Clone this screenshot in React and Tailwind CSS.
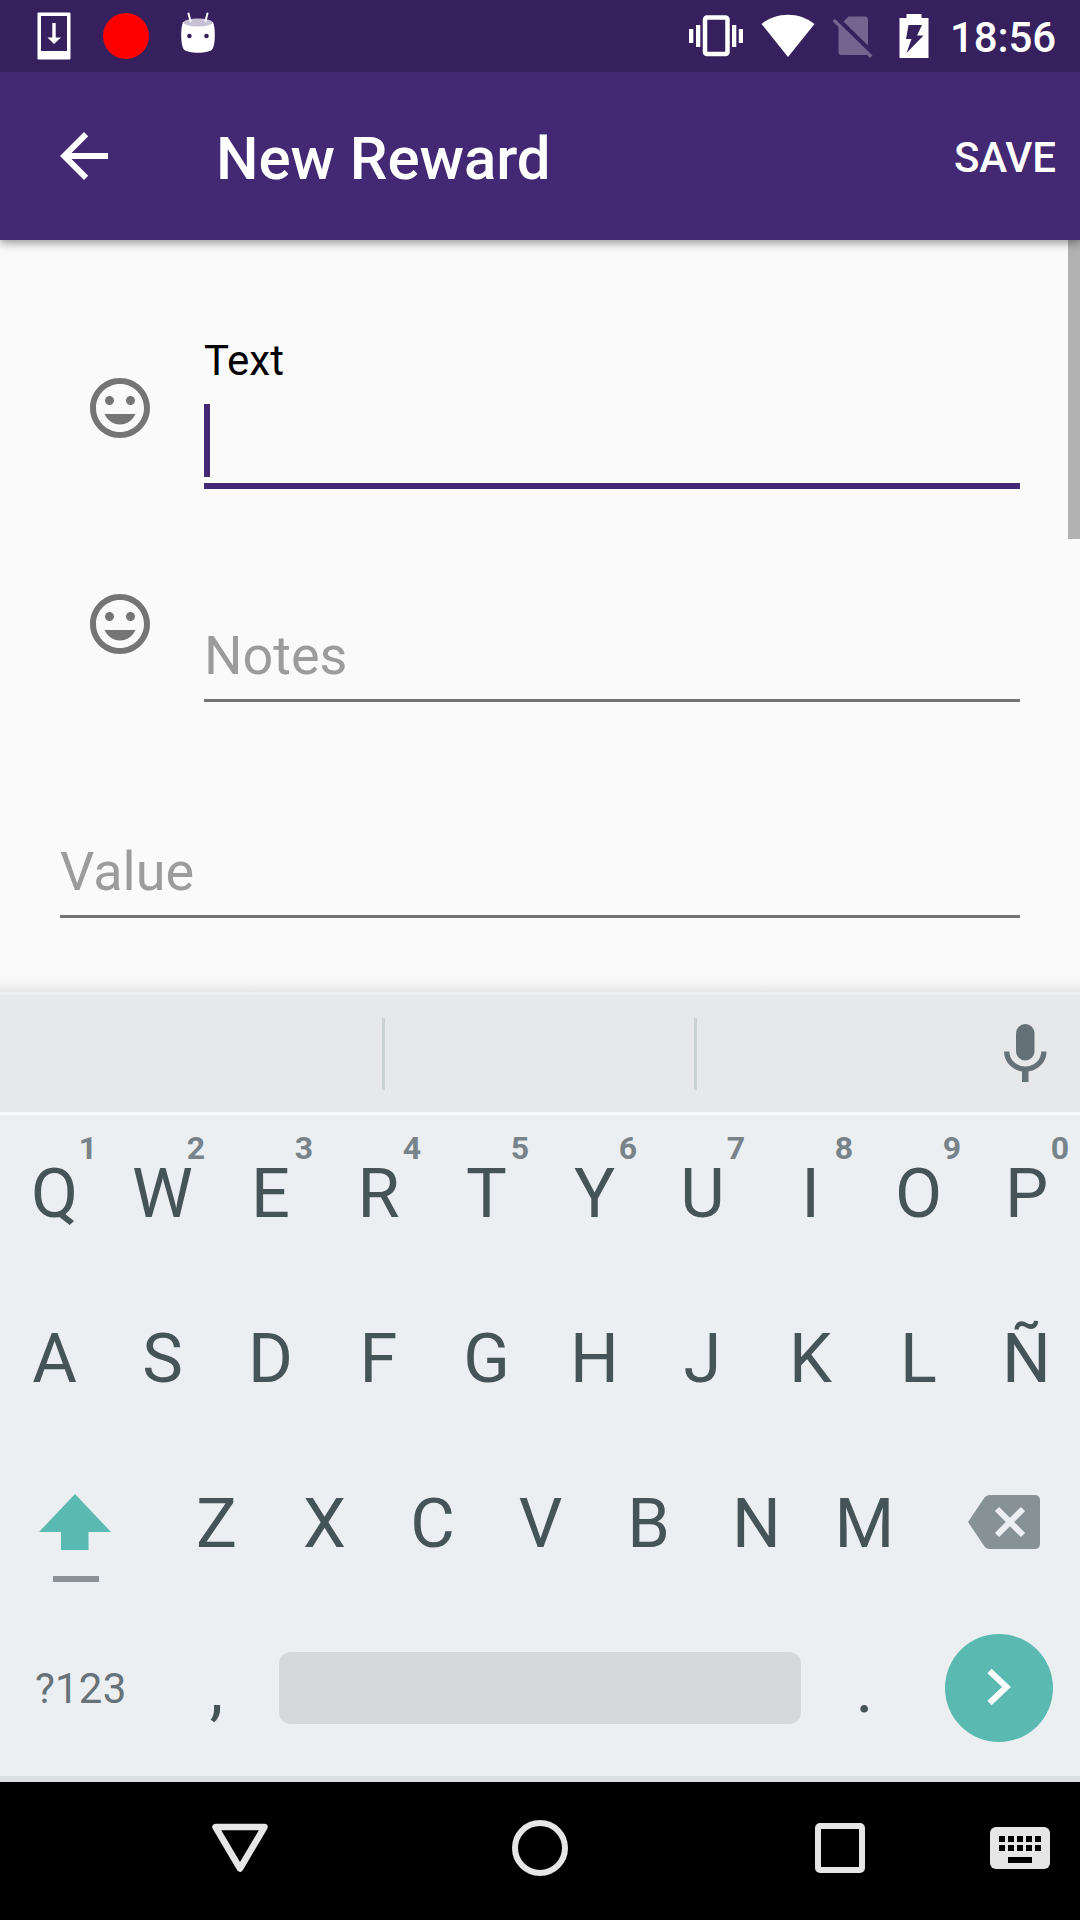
import React from "react";

const TOP_ROW = ["Q", "W", "E", "R", "T", "Y", "U", "I", "O", "P"];
const HINTS = ["1", "2", "3", "4", "5", "6", "7", "8", "9", "0"];
const HOME_ROW = ["A", "S", "D", "F", "G", "H", "J", "K", "L", "Ñ"];
const BOTTOM_ROW = ["Z", "X", "C", "V", "B", "N", "M"];

function StatusBar() {
  return (
    <div className="relative z-20 flex h-[72px] items-center bg-[#36205d] pl-[37px] pr-[25px] text-white">
      <svg className="mr-[32px] h-[72px] w-[34px]" viewBox="37 0 34 72" fill="#fff">
        <path fillRule="evenodd" d="M38.5 12.5h31q1 0 1 1v45q0 1-1 1h-31q-1 0-1-1v-45q0-1 1-1zM41 16v35h26V16z" />
        <path d="M52.3 23h3.400v14.500H61L54 44l-6.500-6.500h4.800z" />
      </svg>
      <div className="mr-[31px] h-[46px] w-[46px] rounded-full bg-[#ff0000]" />
      <svg className="h-[72px] w-[36px]" viewBox="180 0 36 72">
        <path d="M183 22C180.500 28 180.500 44 183.500 49C187 54 209 54 212.500 49C215.500 44 215.500 28 213 22Z" fill="#fff" />
        <ellipse cx="198" cy="22.500" rx="14.500" ry="4" fill="#c7c1d3" />
        <path d="M188.500 13.500l2 7.500M207.500 13.500l-2 7.500" stroke="#fff" strokeWidth="2" strokeLinecap="round" />
        <circle cx="189.400" cy="36" r="2.300" fill="#36205d" />
        <circle cx="206.500" cy="36" r="2.300" fill="#36205d" />
      </svg>
      <svg className="ml-auto mr-[18px] h-[72px] w-[54px]" viewBox="689 0 54 72" fill="#fff">
        <path d="M689 29h4.300v14H689zM696 25h4.300v22H696zM732 25h4.300v22H732zM738.800 29h4.200v14h-4.200z" />
        <rect x="705" y="17.500" width="22.500" height="36.500" rx="2" fill="none" stroke="#fff" strokeWidth="4.500" />
      </svg>
      <svg className="mr-[17px] h-[72px] w-[54px]" viewBox="760.500 0 54 72" fill="#fff">
        <path d="M787.500 57L761 24C776 11.500 799 11.500 814 24Z" />
      </svg>
      <svg className="mr-[26px] h-[72px] w-[41px]" viewBox="831.500 0 41 72" fill="#76638f">
        <path d="M843 21.500L848 16.500H864.500Q867.500 16.500 867.500 19.500V45.500Z" />
        <path d="M834.500 19L872 55.500L869.500 58L866 54.500Q865.500 55 864.500 55H841Q838 55 838 52V27L832 21Z" />
      </svg>
      <svg className="mr-[21px] h-[72px] w-[30px]" viewBox="898.500 0 30 72">
        <path fillRule="evenodd" fill="#fff" d="M906 14h15v4h7v40h-29V18h7zM908 25L905.500 39H911L906 53L923 35.500H916.500L921.500 25Z" />
      </svg>
      <span className="mt-[3px] w-[105px] whitespace-nowrap text-[42px] font-medium leading-[72px] tracking-[-0.1px]">18:56</span>
    </div>
  );
}

function Toolbar() {
  return (
    <div className="relative z-10 flex h-[168px] items-center bg-[#432874] pl-[48px] pr-[24px] text-white shadow-[0_3px_9px_rgba(0,0,0,0.4)]">
      <svg className="mr-[96px] h-[72px] w-[72px]" viewBox="0 0 24 24" fill="#fff">
        <path d="M20 11H7.830l5.590-5.590L12 4l-8 8 8 8 1.410-1.410L7.830 13H20v-2z" />
      </svg>
      <h1 className="mt-[5px] text-[60px] font-medium leading-[72px] tracking-[-0.1px]">New Reward</h1>
      <button className="ml-auto mt-[3px] text-[42px] font-medium leading-[48px] tracking-[-0.1px]">SAVE</button>
    </div>
  );
}

function EmojiIcon() {
  return (
    <svg className="h-[72px] w-[72px]" viewBox="0 0 24 24" fill="#757575">
      <path d="M11.990 2C6.470 2 2 6.480 2 12s4.470 10 9.990 10C17.520 22 22 17.520 22 12S17.520 2 11.990 2zM12 20c-4.420 0-8-3.580-8-8s3.580-8 8-8 8 3.580 8 8-3.580 8-8 8zm3.500-9c.83 0 1.500-.67 1.500-1.500S16.330 8 15.500 8 14 8.670 14 9.500s.67 1.500 1.500 1.500zm-7 0c.83 0 1.500-.67 1.500-1.500S9.330 8 8.500 8 7 8.670 7 9.500 7.670 11 8.500 11zm3.500 6.500c2.330 0 4.310-1.460 5.110-3.500H6.890c.8 2.040 2.780 3.500 5.110 3.500z" />
    </svg>
  );
}

function Form() {
  return (
    <main className="relative flex h-[752px] flex-col bg-[#fafafa] pl-[60px] pr-[60px]">
      <div className="flex h-[249px]">
        <div className="w-[144px] pl-[24px] pt-[132px]"><EmojiIcon /></div>
        <div className="flex flex-1 flex-col border-b-[6px] border-[#432874] pt-[96px]">
          <label className="text-[42px] leading-[50px] text-black">Text</label>
          <div className="mt-[18px] h-[73px] w-[6px] bg-[#432874]" />
        </div>
      </div>
      <div className="flex h-[213px]">
        <div className="w-[144px] pl-[24px] pt-[99px]"><EmojiIcon /></div>
        <div className="flex-1 border-b-[3px] border-[#737373] pt-[135px] text-[54px] leading-[64px] text-[#9c9c9c]">Notes</div>
      </div>
      <div className="h-[216px] border-b-[3px] border-[#737373] pt-[138px] text-[54px] leading-[64px] text-[#9c9c9c]">Value</div>
      <div className="absolute right-0 top-0 h-[299px] w-[12px] bg-[#b2b2b2]" />
      <div className="absolute bottom-0 left-0 h-[18px] w-full bg-linear-to-b from-transparent via-black/2 to-black/8" />
    </main>
  );
}

function Key({ label, hint }) {
  return (
    <div className="relative flex w-[108px] items-center justify-center pb-[7px] pl-px text-[68.500px] leading-[50px] text-[#455459]">
      {label}
      {hint && <span className="absolute right-[11px] top-[17px] text-[32px] font-bold leading-[32px] text-[#778389]">{hint}</span>}
    </div>
  );
}

function SuggestionBar() {
  return (
    <div className="flex h-[123px] border-b-[3px] border-t-[3px] border-b-[#f7f9fa] border-t-[#eef0f2] bg-[#e6e8e9] pt-[23px]">
      <div className="h-[72px] w-[385px] border-r-[3px] border-[#cbd3d3]" />
      <div className="h-[72px] w-[312px] border-r-[3px] border-[#cbd3d3]" />
      <svg className="ml-auto mr-[32px] h-[72px] w-[45px]" viewBox="1003 1018 45 72">
        <rect x="1016" y="1024" width="18.500" height="36.500" rx="9.250" fill="#647278" />
        <path d="M1006.700 1051.500a18.600 17.600 0 0 0 37.200 0" fill="none" stroke="#647278" strokeWidth="5.300" />
        <path d="M1022 1069h6.500v13H1022z" fill="#647278" />
      </svg>
    </div>
  );
}

function Keyboard() {
  return (
    <section className="h-[667px] border-b-[6px] border-[#dbdfe2] bg-[#eceff2]">
      <div className="flex h-[165px]">
        {TOP_ROW.map((k, i) => <Key key={k} label={k} hint={HINTS[i]} />)}
      </div>
      <div className="flex h-[165px]">
        {HOME_ROW.map((k) => <Key key={k} label={k} />)}
      </div>
      <div className="flex h-[165px]">
        <svg className="h-[165px] w-[162px]" viewBox="0 1445 162 165">
          <path d="M75 1494L111 1532H88.500V1550H61V1532H39Z" fill="#5abab1" />
          <path d="M53 1576h46v6H53z" fill="#8a9298" />
        </svg>
        {BOTTOM_ROW.map((k) => <Key key={k} label={k} />)}
        <svg className="h-[165px] w-[162px]" viewBox="918 1445 162 165">
          <path d="M968 1522L984.500 1497.500Q986.500 1495 989.500 1495H1034.500Q1040 1495 1040 1500.500V1543.500Q1040 1549 1034.500 1549H989.500Q986.500 1549 984.500 1546.500Z" fill="#879296" />
          <path d="M997 1509L1023 1535M1023 1509L997 1535" stroke="#eceff2" strokeWidth="6" />
        </svg>
      </div>
      <div className="flex h-[165px] items-center">
        <div className="w-[162px] pb-[9px] pl-[35px] text-[42px] tracking-[0.2px] text-[#677378]">?123</div>
        <div className="flex h-full"><Key label="," /></div>
        <div className="mx-[9px] mb-[9px] h-[72px] w-[522px] rounded-[12px] bg-[#d4d8da]" />
        <div className="flex h-full"><Key label="." /></div>
        <div className="-mt-[9px] ml-[27px] flex h-[108px] w-[108px] items-center justify-center rounded-full bg-[#5abab1]">
          <svg className="h-[108px] w-[108px]" viewBox="945 1634 108 108">
            <path d="M989.500 1671L1006.500 1687L989.500 1703" fill="none" stroke="#fff" strokeWidth="6" />
          </svg>
        </div>
      </div>
    </section>
  );
}

function NavBar() {
  return (
    <nav className="flex h-[138px] items-center bg-black pb-[6px] pl-[90px]">
      <svg className="h-[132px] w-[300px]" viewBox="90 1782 300 132">
        <path d="M215.500 1827H264.500L240 1868.500Z" fill="none" stroke="#e6e6e6" strokeWidth="6.500" strokeLinejoin="round" />
      </svg>
      <div className="flex w-[300px] justify-center">
        <div className="h-[56px] w-[56px] rounded-full border-[6px] border-[#e6e6e6]" />
      </div>
      <div className="flex w-[300px] justify-center">
        <div className="h-[50px] w-[50px] rounded-[5px] border-[6px] border-[#e6e6e6]" />
      </div>
      <svg className="h-[42px] w-[60px]" viewBox="0 0 60 42">
        <rect width="60" height="42" rx="6" fill="#e6e6e6" />
        <path d="M9 9h6v6H9zM18 9h6v6h-6zM27 9h6v6h-6zM36 9h6v6h-6zM45 9h6v6h-6zM9 18h6v6H9zM18 18h6v6h-6zM27 18h6v6h-6zM36 18h6v6h-6zM45 18h6v6h-6zM18 30h24v6H18z" fill="#000" />
      </svg>
    </nav>
  );
}

export default function App() {
  return (
    <div className="h-[1920px] w-[1080px] overflow-hidden font-['Roboto',sans-serif]">
      <StatusBar />
      <Toolbar />
      <Form />
      <SuggestionBar />
      <Keyboard />
      <NavBar />
    </div>
  );
}
